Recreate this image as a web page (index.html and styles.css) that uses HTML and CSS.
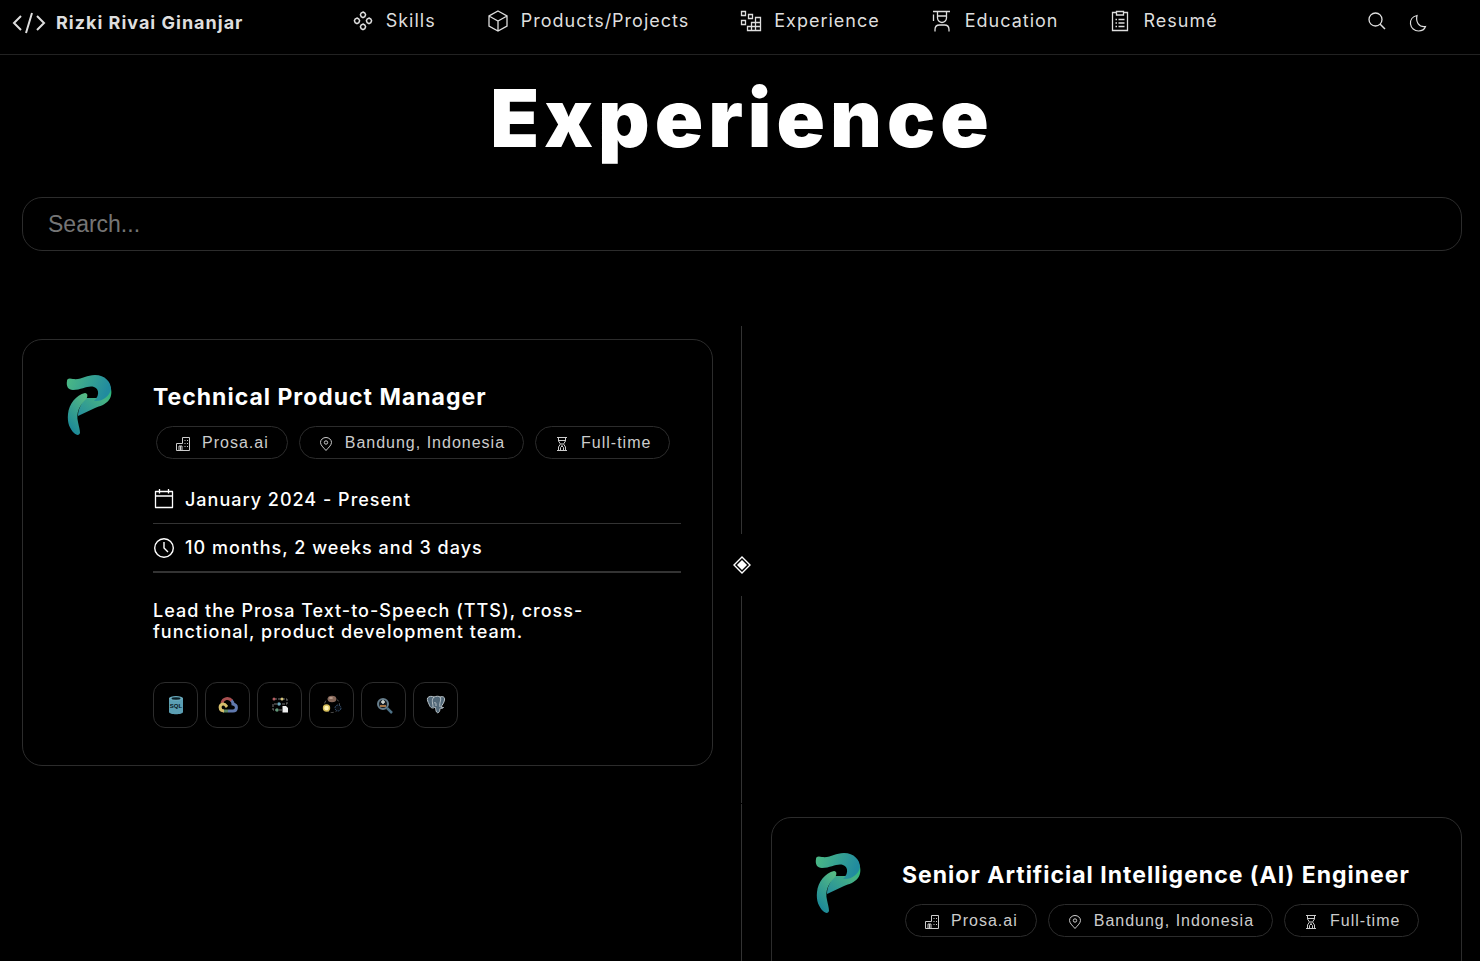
FILE: index.html
```html
<!DOCTYPE html>
<html lang="en">
<head>
<meta charset="utf-8">
<title>Experience</title>
<link rel="stylesheet" href="styles.css">
</head>
<body>
<svg class="defs" aria-hidden="true">
  <defs>
    <linearGradient id="ribbon" x1="0" y1="0" x2="1" y2="0.25"><stop offset="0" stop-color="#4dbb83"/><stop offset="1" stop-color="#218b9f"/></linearGradient>
    <linearGradient id="stem" x1="0.7" y1="0" x2="0.2" y2="1"><stop offset="0" stop-color="#55b985"/><stop offset="1" stop-color="#168499"/></linearGradient>
    <linearGradient id="fold" x1="0" y1="1" x2="1" y2="0"><stop offset="0" stop-color="#258e9d"/><stop offset=".65" stop-color="#46b184"/><stop offset="1" stop-color="#20bd79"/></linearGradient>
    <symbol id="prosa" viewBox="0 0 46 62">
      <path d="M44 12C46 16 46 22 43 26C39 31 34 32 29 34L12 42C12 36 15 29 20 24L30 24C36 22 40 18 44 12Z" fill="url(#fold)"/>
      <path d="M1 7C1 4 4 4 7 5C16 6 20 1 29 1C39 1 45 8 45 15C44 22 36 28 28 27C33 23 34 15 28 13C22 11 16 16 7 16C2 16 0 12 1 7Z" fill="url(#ribbon)"/>
      <path d="M19 19C22 19 22 23 20 25C13 32 10 39 12 48C13 53 14 56 14 59C13 62 10 61 8 59C4 55 1 49 2 40C3 30 10 21 19 19Z" fill="url(#stem)"/>
    </symbol>
    <symbol id="building" viewBox="0 0 14 14"><path d="M.5 13.500V6.500H6.500V.5H13.500V13.500ZM3 13V9H6V13M4.500 9V13" fill="none" stroke="currentColor"/><path d="M8.500 3h1v1h-1zM11 3h1v1h-1zM8.500 6h1v1h-1zM11 6h1v1h-1zM8.500 9h1v1h-1zM11 9h1v1h-1z" fill="currentColor"/></symbol>
    <symbol id="pin" viewBox="0 0 14 14"><path d="M7 13.500C5.500 11.500 1.500 8.500 1.500 5.500A5.500 5 0 0 1 12.500 5.500C12.500 8.500 8.500 11.500 7 13.500Z" fill="none" stroke="currentColor"/><circle cx="7" cy="5.500" r="1.700" fill="none" stroke="currentColor"/></symbol>
    <symbol id="hourglass" viewBox="0 0 14 14"><path d="M2 .5H12M2 13.500H12M3.500 .5V4L5.500 7L3.500 10V13.500M10.500 .5V4L8.500 7L10.500 10V13.500M4 3.500H10M5.500 13V10.500L7 9L8.500 10.500V13M7 6V9" fill="none" stroke="currentColor"/></symbol>
  </defs>
</svg>

<header class="topbar">
  <a class="brand" href="#home">
    <svg class="brand-icon" viewBox="0 0 34 24"><path d="M9 5L2 12L9 19M25 5L32 12L25 19M20 2L14 22" fill="none" stroke="currentColor" stroke-width="2"/></svg>
    <span>Rizki Rivai Ginanjar</span>
  </a>
  <nav class="menu">
    <a class="menu-link" href="#skills"><svg class="menu-icon" viewBox="0 0 22 22"><g fill="none" stroke="currentColor" stroke-width="1.500"><path d="M11 2l1.800 1l.8 1.800l-.8 1.800l-1.800 1l-1.800-1l-.8-1.800l.8-1.800zM5 8l1.800 1l.8 1.800l-.8 1.800l-1.800 1l-1.800-1l-.8-1.800l.8-1.800zM17 8l1.800 1l.8 1.800l-.8 1.800l-1.800 1l-1.800-1l-.8-1.800l.8-1.800zM11 14l1.800 1l.8 1.800l-.8 1.800l-1.800 1l-1.800-1l-.8-1.800l.8-1.800z"/></g></svg>Skills</a>
    <a class="menu-link" href="#products"><svg class="menu-icon" viewBox="0 0 22 22"><path d="M11 1L20 6V16L11 21L2 16V6ZM2 6L11 11L20 6M11 11V21" fill="none" stroke="currentColor" stroke-width="1.300"/></svg>Products/Projects</a>
    <a class="menu-link" href="#experience"><svg class="menu-icon" viewBox="0 0 22 22"><path d="M1.500 1.500h4v4h-4zM8.500 4.500h4v4h-4zM1.500 10.500h4v4h-4zM7.500 16.500h13v4h-13zM11.500 12.500h9v4h-9zM15.500 7.500h5v5h-5zM11.500 12.500v8M15.500 12.500v8" fill="none" stroke="currentColor" stroke-width="1.300"/></svg>Experience</a>
    <a class="menu-link" href="#education"><svg class="menu-icon" viewBox="0 0 22 22"><path d="M2 1.500H19M2.500 4.500V11M6.500 2V8C6.500 10.500 9 12.500 11 12.500S15.500 10.500 15.500 8V2M6.500 6H15.500M4 21.500V19.500C4 16.500 6 15 8.500 15H13.500C16 15 18 16.500 18 19.500V21.500" fill="none" stroke="currentColor" stroke-width="1.300"/></svg>Education</a>
    <a class="menu-link" href="#resume"><svg class="menu-icon" viewBox="0 0 22 22"><path d="M7 2.500H3.500V20.500H18.500V2.500H15M7.500 1.500H14.500V5H7.500ZM6.500 9.500H8M9.500 9.500H15.500M6.500 13H8M9.500 13H15.500M6.500 16.500H8M9.500 16.500H15.500" fill="none" stroke="currentColor" stroke-width="1.300"/></svg>Resumé</a>
  </nav>
  <div class="actions">
    <button class="icon-button" aria-label="Search"><svg viewBox="0 0 18 18"><path d="M12 12L17 17" stroke="currentColor" stroke-width="1.500"/><circle cx="7.500" cy="7.500" r="6.500" fill="none" stroke="currentColor" stroke-width="1.300"/></svg></button>
    <button class="icon-button moon" aria-label="Dark mode"><svg viewBox="0 0 18 18"><path d="M8 1.500C3.500 2.500 1 6 1.500 10C2 14 5.500 17 9.500 17C12.500 17 15.500 15.500 16.500 12.500C10 13.500 6.500 8 8 1.500Z" fill="none" stroke="currentColor" stroke-width="1.200"/></svg></button>
  </div>
</header>

<main class="page">
  <h1 class="title">Experience</h1>
  <input class="search" type="search" placeholder="Search..." aria-label="Search experience">

  <div class="timeline">
    <section class="entry">
      <article class="card">
        <svg class="company-logo" role="img" aria-label="Prosa.ai"><use href="#prosa"/></svg>
        <div class="details">
          <h2 class="role">Technical Product Manager</h2>
          <div class="chips">
            <button class="chip"><svg><use href="#building"/></svg>Prosa.ai</button>
            <button class="chip"><svg><use href="#pin"/></svg>Bandung, Indonesia</button>
            <button class="chip"><svg><use href="#hourglass"/></svg>Full-time</button>
          </div>
          <div class="fact"><svg viewBox="0 0 22 22"><path d="M2.500 3.500H19.500V19.500H2.500ZM2.500 8H19.500M6.500 1V5.500M15.500 1V5.500" fill="none" stroke="currentColor" stroke-width="1.300" stroke-linejoin="round"/></svg>January 2024 - Present</div>
          <div class="fact fact-last"><svg viewBox="0 0 22 22"><circle cx="11" cy="11" r="9.300" fill="none" stroke="currentColor" stroke-width="1.400"/><path d="M11 5V11L15 15" fill="none" stroke="currentColor" stroke-width="1.400"/></svg>10 months, 2 weeks and 3 days</div>
          <p class="summary">Lead the Prosa Text-to-Speech (TTS), cross-functional, product development team.</p>
          <div class="tools">
            <button class="tool" aria-label="SQL"><svg viewBox="0 0 20 20"><path d="M3 3V17C3 20 17 20 17 17V3Z" fill="#5b9eb3"/><ellipse cx="10" cy="3.500" rx="7" ry="2.500" fill="#69aabd"/><ellipse cx="10" cy="3.500" rx="4.500" ry="1.200" fill="#0b2027"/><text class="sql" x="10" y="13" text-anchor="middle">SQL</text></svg></button>
            <button class="tool" aria-label="Google Cloud"><svg viewBox="0 0 20 20"><g fill="none" stroke-width="3"><path d="M4 8C5 3 11 2 14 6" stroke="#a84f50"/><path d="M13.500 5.500C15 7 15 8 15 9C20 10 19 16 15 16H10" stroke="#6079ae"/><path d="M10 16H5" stroke="#588765"/><path d="M6 16C1 16 1 9 5 9C8 9 8 11 9 12" stroke="#d6be6c"/></g></svg></button>
            <button class="tool" aria-label="Workflow"><svg viewBox="0 0 20 20"><path d="M4 4H17V9H3V15H13" fill="none" stroke="#777" stroke-dasharray="3 1"/><circle cx="4" cy="4" r="1.500" fill="#b35d61"/><circle cx="12" cy="4" r="1.500" fill="#d7c57b"/><circle cx="9" cy="9" r="1.700" fill="#6ba6bb"/><circle cx="7" cy="15" r="1.700" fill="#629879"/><path d="M12.500 11H16L18 13V17.500H12.500Z" fill="#eee"/></svg></button>
            <button class="tool" aria-label="Lifecycle"><svg viewBox="0 0 20 20"><circle cx="10" cy="10" r="7.500" fill="none" stroke="#555" stroke-dasharray="3 2"/><ellipse cx="10" cy="4" rx="4.300" ry="3.300" fill="#87685a"/><ellipse cx="9" cy="3" rx="2" ry="1" fill="#b99d8d"/><circle cx="4.500" cy="13" r="3.700" fill="#d5bd58"/><circle cx="4.500" cy="13" r="2.300" fill="#fff4b4"/><circle cx="16" cy="13" r="3" fill="#080c12" stroke="#35506f" stroke-dasharray="2 1"/></svg></button>
            <button class="tool" aria-label="Analysis"><svg viewBox="0 0 20 20"><circle cx="9" cy="9" r="5" fill="#161b20" stroke="#667d8b" stroke-width="2"/><path d="M9 5V9M7 7H11" stroke="#d8ded8" stroke-width="1.500"/><path d="M6 11H12" stroke="#a77545" stroke-width="2"/><path d="M13 13L18 18" stroke="#4e7186" stroke-width="2.500"/></svg></button>
            <button class="tool" aria-label="PostgreSQL"><svg viewBox="0 0 20 20"><path d="M1.500 3C3 1 6 1 8 2C10 1 13 1 14 2C17 1 19 2 18.500 5C18 8 16 10 15 12L17.500 12.500C16 14 14 13 14 13.500C14 17 12 19 10.500 17C9.500 15 10 14 9 12C7 14 4 13 3 9C2 7 1 5 1.500 3Z" fill="#526878" stroke="#bac4ca"/><path d="M8 2C5 5 7 8 7 12M14 2C16 5 13 7 14 12M8 8C10 7 10 8 10 11" fill="none" stroke="#bac4ca"/></svg></button>
          </div>
        </div>
      </article>
      <div class="rail"><svg viewBox="0 0 20 20"><path d="M10 2L18 10L10 18L2 10Z" fill="none" stroke="#fff" stroke-width="1.400"/><path d="M10 5L15 10L10 15L5 10Z" fill="#fff"/></svg></div>
    </section>

    <section class="entry entry-right">
      <article class="card">
        <svg class="company-logo" role="img" aria-label="Prosa.ai"><use href="#prosa"/></svg>
        <div class="details">
          <h2 class="role">Senior Artificial Intelligence (AI) Engineer</h2>
          <div class="chips">
            <button class="chip"><svg><use href="#building"/></svg>Prosa.ai</button>
            <button class="chip"><svg><use href="#pin"/></svg>Bandung, Indonesia</button>
            <button class="chip"><svg><use href="#hourglass"/></svg>Full-time</button>
          </div>
        </div>
      </article>
      <div class="rail"><svg viewBox="0 0 20 20"><path d="M10 2L18 10L10 18L2 10Z" fill="none" stroke="#fff" stroke-width="1.400"/><path d="M10 5L15 10L10 15L5 10Z" fill="#fff"/></svg></div>
    </section>
  </div>
</main>
</body>
</html>
```
FILE: styles.css
```css
* { box-sizing: border-box; }
html { scrollbar-width: none; background: #000; }
body {
  margin: 0;
  background: #000;
  color: #fff;
  font-family: Inter, "Liberation Sans", sans-serif;
  font-size: 18px;
  letter-spacing: 1px;
}
button { background: none; color: inherit; cursor: pointer; }
svg { display: block; flex: none; }
.defs { position: absolute; width: 0; height: 0; }

.topbar {
  display: flex;
  align-items: flex-start;
  height: 55px;
  padding: 0 53px 0 12px;
  border-bottom: 1px solid #222;
  color: #dedede;
}
.brand {
  display: flex;
  align-items: center;
  gap: 10px;
  padding-top: 11px;
  color: inherit;
  font-weight: 700;
  line-height: 24px;
  text-decoration: none;
}
.brand-icon { width: 34px; height: 24px; }
.menu {
  display: flex;
  flex: 1;
  justify-content: center;
  gap: 51px;
  margin-right: 42px;
  padding-top: 10px;
}
.menu-link {
  display: flex;
  align-items: center;
  gap: 12px;
  color: inherit;
  line-height: 22px;
  text-decoration: none;
}
.menu-icon { width: 22px; height: 22px; }
.actions { display: flex; gap: 23px; padding-top: 12px; }
.icon-button { width: 18px; height: 18px; padding: 0; border: 0; }
.moon { margin-top: 2px; }

.page { padding: 15px 18px 0 22px; }
.title {
  margin: 0;
  font-size: 80px;
  font-weight: 900;
  line-height: 96px;
  letter-spacing: 5px;
  text-align: center;
}
.search {
  display: block;
  width: 100%;
  height: 54px;
  margin-top: 31px;
  padding: 0 25px;
  border: 1px solid #2c2c2c;
  border-radius: 20px;
  outline: 0;
  background: #000;
  color: #fff;
  font-family: "Liberation Sans", Arial, sans-serif;
  font-size: 23px;
}
.search::placeholder { color: #757575; }

.timeline { margin-top: 74px; }
.entry { display: grid; grid-template-columns: 1fr 58px 1fr; }
.entry .rail { grid-column: 2; grid-row: 1; }
.entry-right .card { grid-column: 3; }
.rail {
  display: flex;
  flex-direction: column;
  align-items: center;
  gap: 21px;
  padding: 1px 1px 0 0;
}
.rail::before, .rail::after { content: ""; flex: 1; width: 1px; background: #333; }
.rail svg { width: 20px; height: 20px; }

.card {
  display: flex;
  gap: 41px;
  min-height: 427px;
  margin: 14px 0 37px;
  padding: 34px 31px 37px 43px;
  border: 1px solid #2c2c2c;
  border-radius: 20px;
}
.company-logo { width: 46px; height: 62px; }
.details { flex: 1; min-width: 0; padding-top: 9px; }
.role { margin: 0; font-size: 23px; font-weight: 700; line-height: 28px; }
.chips { display: flex; gap: 11px; margin: 15px 0 0 3px; }
.chip {
  display: flex;
  align-items: center;
  gap: 12px;
  height: 33px;
  padding: 0 18px 0 19px;
  border: 1px solid #2c2c2c;
  border-radius: 17px;
  color: #ccc;
  font-family: "Liberation Sans", Arial, sans-serif;
  font-size: 16px;
  letter-spacing: 1px;
  white-space: nowrap;
}
.chip svg { width: 14px; height: 14px; margin-top: 2px; }
.fact {
  display: flex;
  align-items: center;
  gap: 10px;
  height: 49px;
  border-bottom: 1px solid #333;
  font-weight: 500;
}
.fact svg { width: 22px; height: 22px; }
.chips + .fact { margin-top: 16px; }
.fact-last { border-bottom-width: 2px; }
.summary { margin: 27px 0 0; font-weight: 500; line-height: 21px; }
.tools { display: flex; gap: 7px; margin-top: 40px; }
.tool {
  display: grid;
  place-items: center;
  width: 45px;
  height: 46px;
  padding: 0;
  border: 1px solid #2c2c2c;
  border-radius: 12px;
}
.tool svg { width: 20px; height: 20px; }
.sql { fill: #07171d; font-size: 6px; font-weight: 900; letter-spacing: 0; }
```
